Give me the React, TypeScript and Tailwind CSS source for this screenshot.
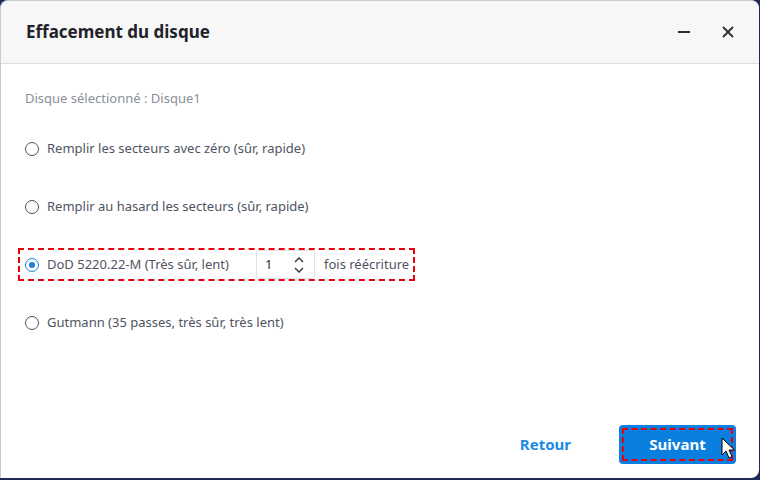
import React, { useState } from 'react';

const options = [
  'Remplir les secteurs avec zéro (sûr, rapide)',
  'Remplir au hasard les secteurs (sûr, rapide)',
  'DoD 5220.22-M (Très sûr, lent)',
  'Gutmann (35 passes, très sûr, très lent)',
];

const Radio: React.FC<{ checked: boolean }> = ({ checked }) => (
  <span
    className={`flex h-[14px] w-[14px] items-center justify-center rounded-full border-[1.5px] ${
      checked ? 'border-[#1a7fe0]' : 'border-[#4b4f5a]'
    }`}
  >
    {checked && <span className="h-[6px] w-[6px] rounded-full bg-[#1a7fe0]" />}
  </span>
);

export default function App() {
  const [selected, setSelected] = useState(2);
  const [passes, setPasses] = useState(1);

  return (
    <div
      className="h-[480px] w-[760px] bg-[#1e2a55] p-0"
      style={{ fontFamily: '"Segoe UI", "Noto Sans", "Liberation Sans", sans-serif' }}
    >
      <div className="flex h-[478px] w-[759px] flex-col overflow-hidden rounded-tl-lg rounded-tr-lg rounded-br-lg border-l border-t border-[#c5ccd6] bg-white">
        {/* header */}
        <div className="flex h-[63px] shrink-0 items-center justify-between border-b border-[#dcdde0] bg-[#f7f7f7] pl-[25px] pr-[22px]">
          <h1 className="text-[17px] font-bold text-[#1f2329]">Effacement du disque</h1>
          <div className="flex items-center gap-[26px] text-[#2a2d33]">
            <svg width="18" height="18" viewBox="0 0 18 18">
              <path d="M3 9h12" stroke="currentColor" strokeWidth="2" />
            </svg>
            <svg width="18" height="18" viewBox="0 0 18 18">
              <path d="M4 4l10 10M14 4L4 14" stroke="currentColor" strokeWidth="1.8" />
            </svg>
          </div>
        </div>

        {/* body */}
        <div className="flex flex-1 flex-col px-[24px] pt-[25px]">
          <p className="text-[13px] text-[#8a8f99]">Disque sélectionné : Disque1</p>

          <div className="mt-[11px] flex flex-col">
            {options.map((label, i) => {
              const dod = i === 2;
              return (
                <div key={label} className="flex h-[58px] items-center">
                  <div
                    className={`flex items-center ${
                      dod ? '-ml-[7px] h-[33px] border-[2.5px] border-dashed border-[#e8000b] pl-[5px] pr-[4px]' : ''
                    }`}
                  >
                    <button
                      onClick={() => setSelected(i)}
                      className="flex items-center gap-[8px] text-[13px] text-[#4f5462]"
                    >
                      <Radio checked={selected === i} />
                      <span>{label}</span>
                    </button>
                    {dod && (
                      <>
                        <div className="ml-[27px] flex h-[29px] w-[59px] items-center justify-between rounded-[3px] border border-[#e1e3e8] pl-[8px] pr-[10px] text-[13px] text-[#2a2d33]">
                          <span>{passes}</span>
                          <div className="flex flex-col items-center gap-[4px] text-[#3b3f48]">
                            <svg width="10" height="6" viewBox="0 0 10 6" onClick={() => setPasses(passes + 1)}>
                              <path d="M1 5l4-4 4 4" fill="none" stroke="currentColor" strokeWidth="1.5" />
                            </svg>
                            <svg width="10" height="6" viewBox="0 0 10 6" onClick={() => setPasses(Math.max(1, passes - 1))}>
                              <path d="M1 1l4 4 4-4" fill="none" stroke="currentColor" strokeWidth="1.5" />
                            </svg>
                          </div>
                        </div>
                        <span className="ml-[9px] text-[13px] text-[#4f5462]">fois réécriture</span>
                      </>
                    )}
                  </div>
                </div>
              );
            })}
          </div>

          <div className="mt-auto mb-[14px] flex items-center justify-end gap-[48px] -mr-[1px]">
            <button className="text-[15px] font-bold text-[#1a8ae5]">Retour</button>
            <button className="relative flex h-[39px] w-[117px] items-center justify-center rounded-[4px] bg-[#0a7fdf] p-[3px]">
              <span className="flex h-full w-full items-center justify-center border-[2.5px] border-dashed border-[#e8000b] text-[15px] font-bold text-white">
                Suivant
              </span>
              <svg className="absolute right-[1px] top-[12px]" width="14" height="22" viewBox="0 0 14 22">
                <path d="M1 1v17l4-4 3 7 3-1.5-3-6.5h5.5z" fill="white" stroke="black" strokeWidth="1" strokeLinejoin="round" />
              </svg>
            </button>
          </div>
        </div>
      </div>
    </div>
  );
}
